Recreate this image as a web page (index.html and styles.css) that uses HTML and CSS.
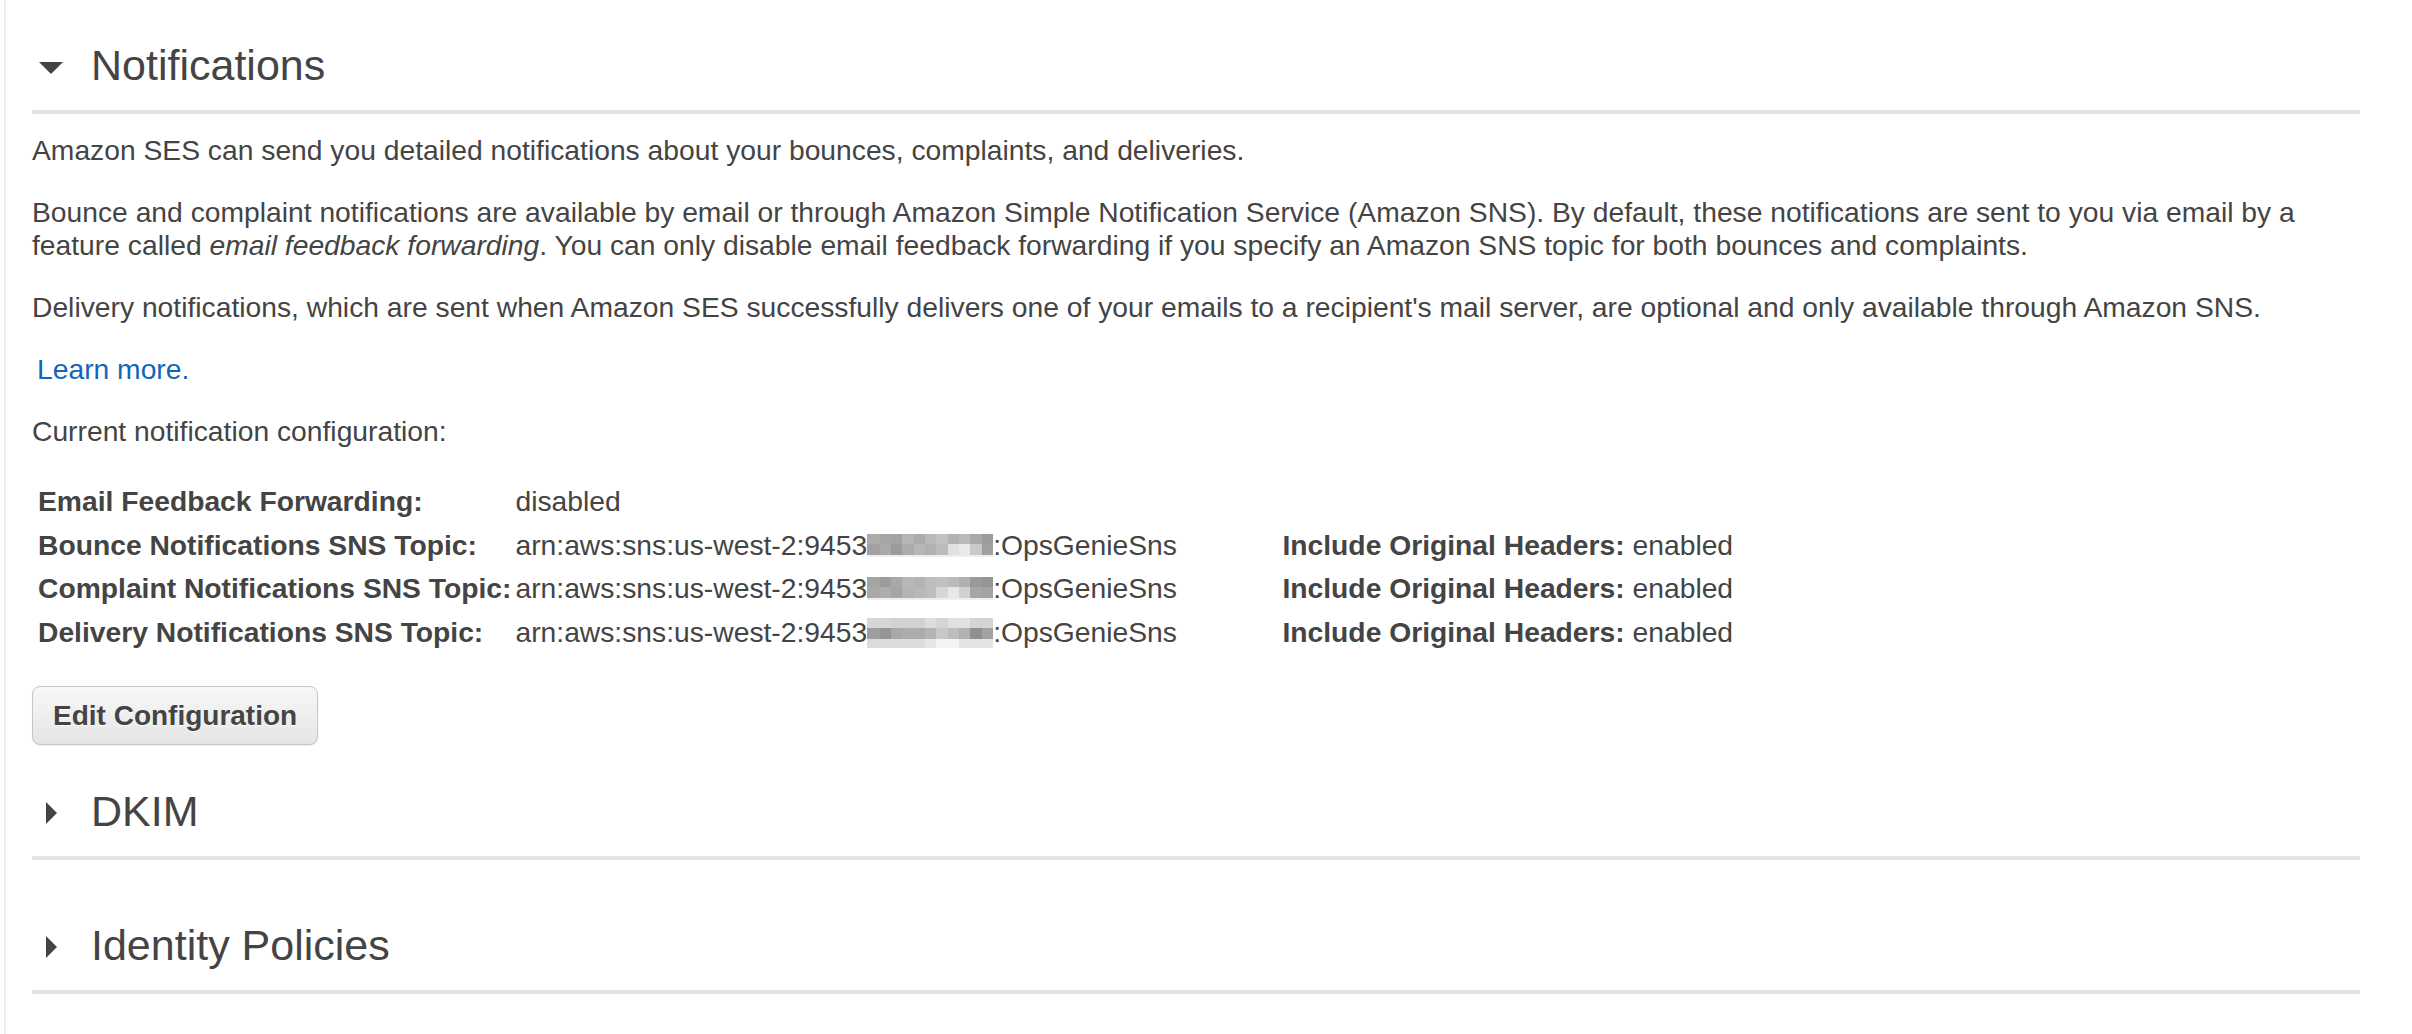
FILE: index.html
```html
<!DOCTYPE html>
<html lang="en">
<head>
<meta charset="utf-8">
<title>Notifications</title>
<link rel="stylesheet" href="styles.css">
</head>
<body>
<div class="panel">
  <section class="section">
    <div class="section-head">
      <span class="caret"><span class="tri-down"></span></span>
      <h2 class="section-title">Notifications</h2>
    </div>
    <div class="section-body">
      <p class="text">Amazon SES can send you detailed notifications about your bounces, complaints, and deliveries.</p>
      <p class="text">Bounce and complaint notifications are available by email or through Amazon Simple Notification Service (Amazon SNS). By default, these notifications are sent to you via email by a feature called <em>email feedback forwarding</em>. You can only disable email feedback forwarding if you specify an Amazon SNS topic for both bounces and complaints.</p>
      <p class="text">Delivery notifications, which are sent when Amazon SES successfully delivers one of your emails to a recipient's mail server, are optional and only available through Amazon SNS.</p>
      <p class="text indent"><a class="link" href="#">Learn more.</a></p>
      <p class="text">Current notification configuration:</p>

      <div class="config">
        <div class="cell key">Email Feedback Forwarding:</div>
        <div class="cell value">disabled</div>
        <div class="cell"></div>

        <div class="cell key">Bounce Notifications SNS Topic:</div>
        <div class="cell value">arn:aws:sns:us-west-2:9453<span class="blur blur-a"></span>:OpsGenieSns</div>
        <div class="cell"><b class="label">Include Original Headers:</b> enabled</div>

        <div class="cell key">Complaint Notifications SNS Topic:</div>
        <div class="cell value">arn:aws:sns:us-west-2:9453<span class="blur blur-b"></span>:OpsGenieSns</div>
        <div class="cell"><b class="label">Include Original Headers:</b> enabled</div>

        <div class="cell key">Delivery Notifications SNS Topic:</div>
        <div class="cell value">arn:aws:sns:us-west-2:9453<span class="blur blur-c"></span>:OpsGenieSns</div>
        <div class="cell"><b class="label">Include Original Headers:</b> enabled</div>
      </div>

      <button class="btn" type="button">Edit Configuration</button>
    </div>
  </section>

  <section class="section collapsed">
    <div class="section-head">
      <span class="caret"><span class="tri-right"></span></span>
      <h2 class="section-title">DKIM</h2>
    </div>
  </section>

  <section class="section collapsed">
    <div class="section-head">
      <span class="caret"><span class="tri-right"></span></span>
      <h2 class="section-title">Identity Policies</h2>
    </div>
  </section>
</div>
</body>
</html>
```

FILE: styles.css
```css
html, body {
  margin: 0;
  padding: 0;
  background: #ffffff;
}

body {
  font-family: "Liberation Sans", Arial, Helvetica, sans-serif;
  color: #444444;
  font-size: 28.25px;
  line-height: 33px;
}

.panel {
  margin-left: 4px;
  border-left: 2px solid #ededed;
  padding: 41px 52px 0 26px;
  min-height: 1034px;
  box-sizing: border-box;
}

.section + .section {
  margin-top: 42px;
}

.section.collapsed {
  padding-bottom: 19px;
}

.section-head {
  display: flex;
  align-items: center;
  padding-bottom: 21px;
  border-bottom: 4px solid #e3e3e3;
}

.caret {
  width: 38px;
  margin-right: 21px;
  display: flex;
  justify-content: center;
  align-items: center;
  height: 48px;
}

.tri-down {
  width: 0;
  height: 0;
  border-left: 12px solid transparent;
  border-right: 12px solid transparent;
  border-top: 12px solid #444444;
  margin-top: 5px;
}

.tri-right {
  width: 0;
  height: 0;
  border-top: 11px solid transparent;
  border-bottom: 11px solid transparent;
  border-left: 11px solid #444444;
  margin-top: 3px;
}

.section-title {
  margin: 0;
  font-size: 43px;
  line-height: 48px;
  font-weight: normal;
  color: #444444;
}

.section-body {
  padding-top: 20px;
}

.text {
  margin: 0 0 29px;
}

.indent {
  padding-left: 5px;
}

.link {
  color: #1166bb;
  text-decoration: none;
}

.config {
  display: grid;
  grid-template-columns: max-content 767px max-content;
  margin: 32px 0 0 3px;
}

.cell {
  padding: 5px 3px 5.5px;
  white-space: nowrap;
}

.key {
  font-weight: bold;
  padding-right: 1px;
}

.label {
  font-weight: bold;
}

.blur {
  display: inline-block;
  width: 126px;
  height: 23px;
  vertical-align: -2px;
  background-repeat: no-repeat;
}

.blur-a {
  background-image:
    linear-gradient(to right, #ababab 0 10%, #a6a6a6 10% 19%, #a3a3a3 19% 28%, #b6b6b6 28% 37%, #acacac 37% 46%, #b9b9b9 46% 55%, #c2c2c2 55% 64%, #b2b2b2 64% 73%, #b9b9b9 73% 82%, #a9a9a9 82% 91%, #9c9c9c 91% 100%),
    linear-gradient(to right, #a1a1a1 0 10%, #a9a9a9 10% 19%, #9b9b9b 19% 28%, #ababab 28% 37%, #b6b6b6 37% 46%, #b1b1b1 46% 55%, #bcbcbc 55% 64%, #e0e0e0 64% 73%, #e9e9e9 73% 82%, #c9c9c9 82% 91%, #a0a0a0 91% 100%),
    linear-gradient(#eeeeee, #eeeeee);
  background-size: 100% 10px, 100% 11px, 100% 2px;
  background-position: 0 0, 0 10px, 0 21px;
}

.blur-b {
  background-image:
    linear-gradient(to right, #a4a4a4 0 10%, #9c9c9c 10% 19%, #a9a9a9 19% 28%, #b7b7b7 28% 37%, #b3b3b3 37% 46%, #bdbdbd 46% 55%, #c1c1c1 55% 64%, #bababa 64% 73%, #b0b0b0 73% 82%, #9a9a9a 82% 91%, #949494 91% 100%),
    linear-gradient(to right, #a9a9a9 0 10%, #adadad 10% 19%, #a6a6a6 19% 28%, #b4b4b4 28% 37%, #b8b8b8 37% 46%, #bdbdbd 46% 55%, #d7d7d7 55% 64%, #e8e8e8 64% 73%, #d1d1d1 73% 82%, #a6a6a6 82% 91%, #a3a3a3 91% 100%),
    linear-gradient(#eeeeee, #eeeeee);
  background-size: 100% 10px, 100% 11px, 100% 2px;
  background-position: 0 0, 0 10px, 0 21px;
}

.blur-c {
  height: 30px;
  vertical-align: -6px;
  background-image:
    linear-gradient(to right, #d6d6d6 0 19%, #d2d2d2 19% 46%, #dddddd 46% 55%, #d5d5d5 55% 64%, #e1e1e1 64% 82%, #d4d4d4 82% 100%),
    linear-gradient(to right, #9e9e9e 0 10%, #949494 10% 19%, #a8a8a8 19% 28%, #acacac 28% 46%, #b4b4b4 46% 55%, #c8c8c8 55% 64%, #bdbdbd 64% 73%, #b1b1b1 73% 82%, #8f8f8f 82% 91%, #a2a2a2 91% 100%),
    linear-gradient(to right, #dcdcdc 0 46%, #e6e6e6 46% 55%, #f4f4f4 55% 73%, #e4e4e4 73% 100%);
  background-size: 100% 10px, 100% 11px, 100% 9px;
  background-position: 0 0, 0 10px, 0 21px;
}

.btn {
  margin-top: 32px;
  font-family: "Liberation Sans", Arial, Helvetica, sans-serif;
  font-size: 28px;
  line-height: 33px;
  font-weight: bold;
  color: #444444;
  padding: 12px 20px;
  border: 1px solid #c6c6c6;
  border-radius: 8px;
  background: linear-gradient(#f8f8f8, #e5e5e5);
  text-shadow: 0 1px 0 #ffffff;
  box-shadow: 0 1px 1px rgba(0, 0, 0, 0.08);
  cursor: pointer;
}
```
